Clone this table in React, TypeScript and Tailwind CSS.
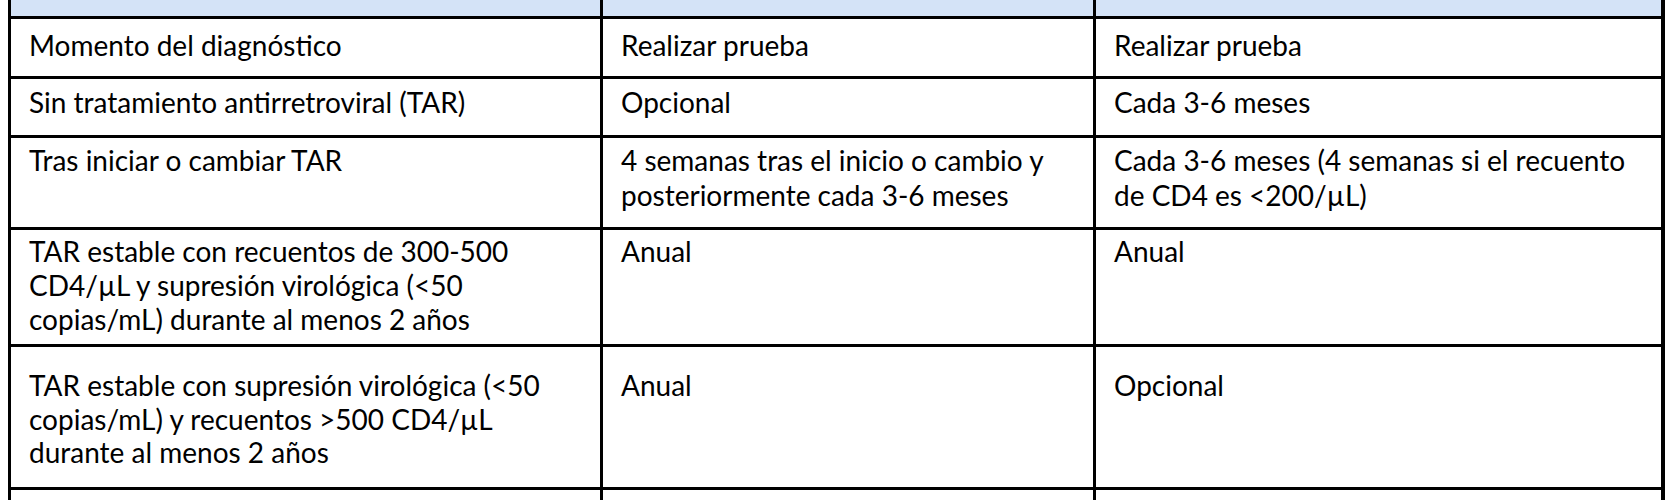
import { FC } from "react";

interface Row {
    cells: string[][];
    rowClass: string;
    cellClass: string;
}

const rows: Row[] = [
    {
        cells: [["Momento del diagnóstico"], ["Realizar prueba"], ["Realizar prueba"]],
        rowClass: "h-[60px]",
        cellClass: "pt-[9px] leading-[34px]",
    },
    {
        cells: [["Sin tratamiento antirretroviral (TAR)"], ["Opcional"], ["Cada 3-6 meses"]],
        rowClass: "h-[59px]",
        cellClass: "pt-[6px] leading-[34px]",
    },
    {
        cells: [
            ["Tras iniciar o cambiar TAR"],
            ["4 semanas tras el inicio o cambio y", "posteriormente cada 3-6 meses"],
            ["Cada 3-6 meses (4 semanas si el recuento", "de CD4 es <200/µL)"],
        ],
        rowClass: "h-[92px]",
        cellClass: "pt-[5px] leading-[35px]",
    },
    {
        cells: [
            ["TAR estable con recuentos de 300-500", "CD4/µL y supresión virológica (<50", "copias/mL) durante al menos 2 años"],
            ["Anual"],
            ["Anual"],
        ],
        rowClass: "h-[117px]",
        cellClass: "pt-[4px] leading-[34px]",
    },
    {
        cells: [
            ["TAR estable con supresión virológica (<50", "copias/mL) y recuentos >500 CD4/µL", "durante al menos 2 años"],
            ["Anual"],
            ["Opcional"],
        ],
        rowClass: "h-[143px]",
        cellClass: "pt-[22px] leading-[33.5px]",
    },
];

const widths = ["w-[592px]", "w-[493px]", "w-[571px]"];

const App: FC = () => {
    return (
        <div className="w-[1678px] h-[500px] overflow-hidden bg-white text-black font-['Lato',sans-serif] text-[28px]">
            <div className="ml-[8px] w-[1657px] border-l-[3px] border-r-[4px] border-black">
                {/* header row, cut off at the top */}
                <div className="flex h-[19px] border-b-[3px] border-black bg-[#d4e3f7]">
                    {widths.map((w, i) => (
                        <div key={i} className={`${w} ${i < 2 ? 'border-r-[3px] border-black' : 'flex-1'}`} />
                    ))}
                </div>
                {rows.map((row, r) => (
                    <div key={r} className={`flex border-b-[3px] border-black box-border ${row.rowClass}`}>
                        {row.cells.map((lines, c) => (
                            <div
                                key={c}
                                className={`${c < 2 ? widths[c] + ' border-r-[3px] border-black' : 'flex-1'} px-[18px] ${row.cellClass}`}
                            >
                                {lines.map((line, k) => (
                                    <div key={k} className="whitespace-nowrap">{line}</div>
                                ))}
                            </div>
                        ))}
                    </div>
                ))}
                <div className="flex h-[20px]">
                    {widths.map((w, i) => (
                        <div key={i} className={`${w} ${i < 2 ? 'border-r-[3px] border-black' : 'flex-1'}`} />
                    ))}
                </div>
            </div>
        </div>
    )
}

export default App
